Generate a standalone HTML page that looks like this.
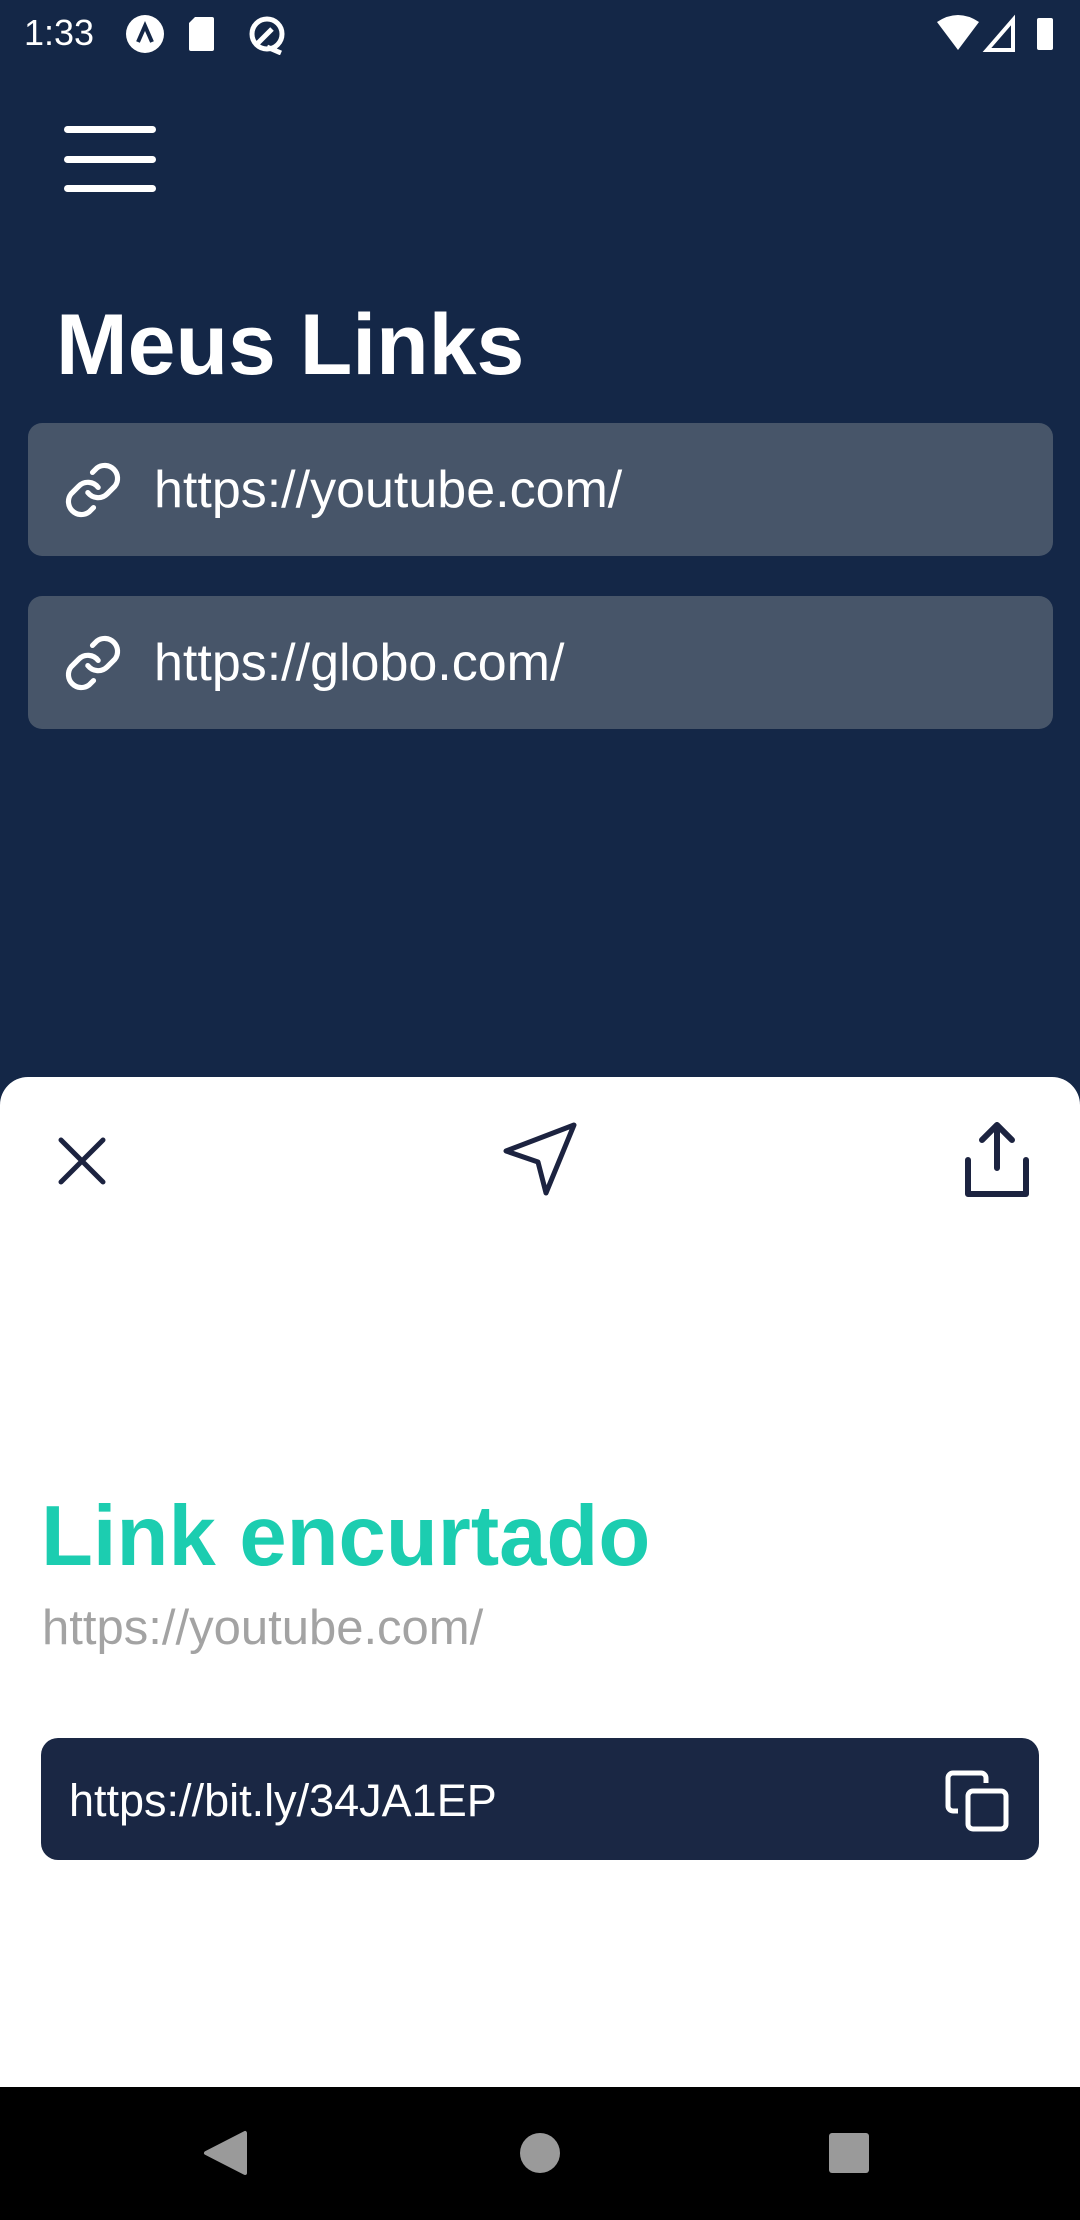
<!DOCTYPE html>
<html><head><meta charset="utf-8"><style>
*{margin:0;padding:0;box-sizing:border-box}
body{width:1080px;height:2220px;background:#142747;font-family:"Liberation Sans",sans-serif;position:relative;overflow:hidden}
.abs{position:absolute}
.card{position:absolute;left:28px;width:1025px;height:133px;background:#475569;border-radius:14px;display:flex;align-items:center}
.card span{color:#fff;font-size:52px;position:absolute;left:126px}
.card svg{position:absolute;left:34px}
</style></head><body>
<div class="abs" style="left:24px;top:12px;color:#fff;font-size:36px">1:33</div>
<svg class="abs" style="left:124px;top:13px" width="170" height="42" viewBox="0 0 170 42">
<circle cx="21" cy="21" r="19" fill="#fff"/><path d="M14 29 L21 13 L28 29" stroke="#142747" stroke-width="4" fill="none"/>
<path d="M71 4 h17 a2 2 0 0 1 2 2 v30 a2 2 0 0 1 -2 2 h-21 a2 2 0 0 1 -2 -2 v-26 z" fill="#fff"/>
<circle cx="143" cy="21" r="15" fill="none" stroke="#fff" stroke-width="5"/><path d="M134 30 l14 -14" stroke="#fff" stroke-width="5"/><path d="M143 34 l14 6" stroke="#fff" stroke-width="5"/>
</svg>
<svg class="abs" style="left:935px;top:14px" width="125" height="38" viewBox="0 0 125 38">
<path d="M2 8 Q23 -6 44 8 L23 36 Z" fill="#fff"/>
<path d="M52 36 L78 6 V36 Z" fill="none" stroke="#fff" stroke-width="4"/>
<rect x="102" y="4" width="16" height="32" rx="2" fill="#fff"/>
</svg>
<div class="abs" style="left:64px;top:126px;width:92px;height:7px;background:#fff;border-radius:4px"></div>
<div class="abs" style="left:64px;top:156px;width:92px;height:7px;background:#fff;border-radius:4px"></div>
<div class="abs" style="left:64px;top:185px;width:92px;height:7px;background:#fff;border-radius:4px"></div>
<div class="abs" style="left:56px;top:290px;color:#fff;font-size:86px;font-weight:bold;line-height:110px">Meus Links</div>

<div class="card" style="top:423px">
<svg width="62" height="62" viewBox="0 0 24 24" fill="none" stroke="#fff" stroke-width="2" stroke-linecap="round"><path d="M10 13a5 5 0 0 0 7.5.5l3-3a5 5 0 0 0-7-7l-1.7 1.7"/><path d="M14 11a5 5 0 0 0-7.5-.5l-3 3a5 5 0 0 0 7 7l1.7-1.7"/></svg>
<span>https://youtube.com/</span></div>
<div class="card" style="top:596px">
<svg width="62" height="62" viewBox="0 0 24 24" fill="none" stroke="#fff" stroke-width="2" stroke-linecap="round"><path d="M10 13a5 5 0 0 0 7.5.5l3-3a5 5 0 0 0-7-7l-1.7 1.7"/><path d="M14 11a5 5 0 0 0-7.5-.5l-3 3a5 5 0 0 0 7 7l1.7-1.7"/></svg>
<span>https://globo.com/</span></div>

<div class="abs" style="left:0;top:1077px;width:1080px;height:1010px;background:#fff;border-radius:28px 28px 0 0"></div>
<svg class="abs" style="left:58px;top:1137px" width="48" height="48" viewBox="0 0 48 48"><path d="M3 3L45 45M45 3L3 45" stroke="#1c2340" stroke-width="5" stroke-linecap="round"/></svg>
<svg class="abs" style="left:503px;top:1121px" width="76" height="76" viewBox="0 0 76 76"><path d="M71 4 L3 30 L35 41 L43 72 Z" fill="none" stroke="#1c2340" stroke-width="5" stroke-linejoin="round"/></svg>
<svg class="abs" style="left:964px;top:1120px" width="68" height="80" viewBox="0 0 68 80"><path d="M4 40 V74 H62 V40" fill="none" stroke="#1c2340" stroke-width="6" stroke-linecap="round" stroke-linejoin="round"/><path d="M33 48 V5 M18 20 L33 5 L48 20" fill="none" stroke="#1c2340" stroke-width="6" stroke-linecap="round" stroke-linejoin="round"/></svg>

<div class="abs" style="left:41px;top:1482px;color:#1ccdb0;font-size:85px;font-weight:bold;line-height:110px">Link encurtado</div>
<div class="abs" style="left:42px;top:1600px;color:#a3a3a3;font-size:49px;line-height:56px">https://youtube.com/</div>
<div class="abs" style="left:41px;top:1738px;width:998px;height:122px;background:#1a2744;border-radius:17px"></div>
<div class="abs" style="left:69px;top:1776px;color:#fff;font-size:45px;line-height:50px">https://bit.ly/34JA1EP</div>
<svg class="abs" style="left:944px;top:1769px" width="66" height="66" viewBox="0 0 66 66" fill="none" stroke="#fff" stroke-width="5"><rect x="24" y="22" width="38" height="38" rx="5"/><path d="M14 42 H9 a5 5 0 0 1 -5 -5 V9 a5 5 0 0 1 5 -5 h28 a5 5 0 0 1 5 5 v5"/></svg>

<div class="abs" style="left:0;top:2087px;width:1080px;height:133px;background:#000"></div>
<svg class="abs" style="left:0;top:2087px" width="1080" height="133" viewBox="0 0 1080 133"><path d="M206 66 L245 46 V86 Z" fill="#9a9a9a" stroke="#9a9a9a" stroke-width="4" stroke-linejoin="round"/><circle cx="540" cy="66" r="20" fill="#9a9a9a"/><rect x="829" y="46" width="40" height="40" rx="3" fill="#9a9a9a"/></svg>
</body></html>
